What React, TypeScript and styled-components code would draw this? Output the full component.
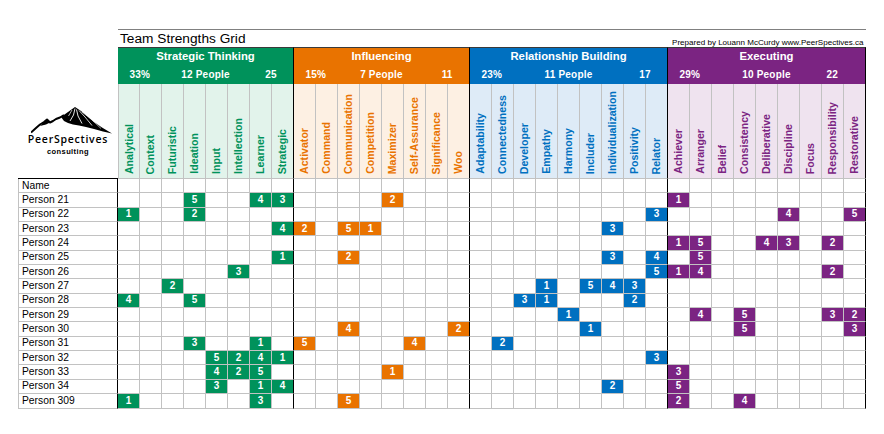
import React from 'react';
import styled, { createGlobalStyle } from 'styled-components';

const GlobalStyle = createGlobalStyle`
  html, body { margin: 0; padding: 0; background: #ffffff; }
  body { font-family: "Liberation Sans", Arial, sans-serif; color: #000; }
  * { box-sizing: border-box; }
`;

type Cat = {
  title: string;
  pct: string;
  people: string;
  count: string;
  color: string;
  tint: string;
  countSpan: number;
  strengths: string[];
};

const CATS: Cat[] = [
  {
    title: 'Strategic Thinking', pct: '33%', people: '12 People', count: '25',
    color: '#00925b', tint: '#e2f3eb', countSpan: 2,
    strengths: ['Analytical', 'Context', 'Futuristic', 'Ideation', 'Input', 'Intellection', 'Learner', 'Strategic'],
  },
  {
    title: 'Influencing', pct: '15%', people: '7 People', count: '11',
    color: '#e97300', tint: '#fdf0e3', countSpan: 2,
    strengths: ['Activator', 'Command', 'Communication', 'Competition', 'Maximizer', 'Self-Assurance', 'Significance', 'Woo'],
  },
  {
    title: 'Relationship Building', pct: '23%', people: '11 People', count: '17',
    color: '#0070c0', tint: '#deebf7', countSpan: 2,
    strengths: ['Adaptability', 'Connectedness', 'Developer', 'Empathy', 'Harmony', 'Includer', 'Individualization', 'Positivity', 'Relator'],
  },
  {
    title: 'Executing', pct: '29%', people: '10 People', count: '22',
    color: '#7b2482', tint: '#efe3ef', countSpan: 3,
    strengths: ['Achiever', 'Arranger', 'Belief', 'Consistency', 'Deliberative', 'Discipline', 'Focus', 'Responsibility', 'Restorative'],
  },
];

const PEOPLE: [string, Record<string, number>][] = [
  ['Name', {}],
  ['Person 21', { Ideation: 5, Learner: 4, Strategic: 3, Maximizer: 2, Achiever: 1 }],
  ['Person 22', { Analytical: 1, Ideation: 2, Relator: 3, Discipline: 4, Restorative: 5 }],
  ['Person 23', { Strategic: 4, Activator: 2, Communication: 5, Competition: 1, Individualization: 3 }],
  ['Person 24', { Achiever: 1, Arranger: 5, Deliberative: 4, Discipline: 3, Responsibility: 2 }],
  ['Person 25', { Strategic: 1, Communication: 2, Individualization: 3, Relator: 4, Arranger: 5 }],
  ['Person 26', { Intellection: 3, Relator: 5, Achiever: 1, Arranger: 4, Responsibility: 2 }],
  ['Person 27', { Futuristic: 2, Empathy: 1, Includer: 5, Individualization: 4, Positivity: 3 }],
  ['Person 28', { Analytical: 4, Ideation: 5, Developer: 3, Empathy: 1, Positivity: 2 }],
  ['Person 29', { Harmony: 1, Arranger: 4, Consistency: 5, Responsibility: 3, Restorative: 2 }],
  ['Person 30', { Communication: 4, Woo: 2, Includer: 1, Consistency: 5, Restorative: 3 }],
  ['Person 31', { Ideation: 3, Learner: 1, Activator: 5, 'Self-Assurance': 4, Connectedness: 2 }],
  ['Person 32', { Input: 5, Intellection: 2, Learner: 4, Strategic: 1, Relator: 3 }],
  ['Person 33', { Input: 4, Intellection: 2, Learner: 5, Maximizer: 1, Achiever: 3 }],
  ['Person 34', { Input: 3, Learner: 1, Strategic: 4, Individualization: 2, Achiever: 5 }],
  ['Person 309', { Analytical: 1, Learner: 3, Communication: 5, Achiever: 2, Consistency: 4 }],
];

const GRID_LINE = '#c2c2c2';
const COL_W = 22;
const NAME_W = 100;

const Sheet = styled.div`
  display: flex;
  flex-direction: column;
  width: ${NAME_W + 34 * COL_W}px;
  margin: 29px 0 0 18px;
`;

const TitleRow = styled.div`
  display: flex;
  height: 18px;
`;

const TitleSpacer = styled.div`
  width: ${NAME_W}px;
  flex: none;
`;

const TitleBar = styled.div`
  flex: 1;
  border-top: 1px solid #808080;
  display: flex;
  justify-content: space-between;
  align-items: flex-end;
`;

const Title = styled.div`
  font-size: 13.7px;
  line-height: 1;
  padding: 0 0 1px 2px;
  white-space: nowrap;
`;

const Credit = styled.div`
  font-size: 8.05px;
  line-height: 1;
  padding: 0 2.5px 0 0;
  white-space: nowrap;
`;

const HeaderRow = styled.div`
  display: flex;
  height: 132px;
`;

const LogoCell = styled.div`
  width: ${NAME_W}px;
  flex: none;
  border-bottom: 1px solid #000;
  display: flex;
  flex-direction: column;
  align-items: center;
  padding-top: 59px;
`;

const LogoMark = styled.svg`
  display: block;
  width: 82px;
  height: 28px;
  margin-left: 8px;
`;

const LogoName = styled.div`
  font-family: "Open Sans", "DejaVu Sans", sans-serif;
  font-weight: 600;
  font-size: 10.5px;
  letter-spacing: 0.75px;
  line-height: 11px;
  white-space: nowrap;
`;

const LogoSub = styled.div`
  font-family: "Liberation Sans", Arial, sans-serif;
  font-weight: 700;
  font-size: 7.5px;
  letter-spacing: 0.4px;
  line-height: 9px;
  margin-top: 1.6px;
  white-space: nowrap;
`;

const CategoryBlock = styled.div<{ $n: number }>`
  width: ${(p) => p.$n * COL_W}px;
  flex: none;
  display: flex;
  flex-direction: column;
`;

const Band = styled.div<{ $color: string }>`
  height: 37px;
  background: ${(p) => p.$color};
  border-top: 1px solid #3a3a3a;
  border-right: 1px solid #000;
  color: #fff;
  font-weight: 700;
  display: flex;
  flex-direction: column;
`;

const BandTitle = styled.div`
  height: 18px;
  display: flex;
  align-items: center;
  justify-content: center;
  font-size: 11.3px;
  line-height: 1;
  white-space: nowrap;
`;

const BandStats = styled.div<{ $n: number }>`
  height: 18px;
  display: grid;
  grid-template-columns: repeat(${(p) => p.$n}, 1fr);
  align-items: center;
  font-size: 10px;
  letter-spacing: 0.2px;
  line-height: 1;
`;

const Stat = styled.span<{ $start: number; $span: number }>`
  grid-row: 1;
  grid-column: ${(p) => p.$start} / span ${(p) => p.$span};
  text-align: center;
  white-space: nowrap;
`;

const Heads = styled.div<{ $n: number }>`
  height: 95px;
  display: grid;
  grid-template-columns: repeat(${(p) => p.$n}, 1fr);
`;

const Head = styled.div<{ $tint: string; $color: string; $edge: boolean; $first: boolean }>`
  background: ${(p) => p.$tint};
  color: ${(p) => p.$color};
  border-right: 1px solid ${(p) => (p.$edge ? '#000' : GRID_LINE)};
  border-left: ${(p) => (p.$first ? `1px solid ${GRID_LINE}` : 'none')};
  border-bottom: 1px solid ${GRID_LINE};
  display: flex;
  align-items: flex-end;
  justify-content: center;
  padding-bottom: 4px;
  font-weight: 700;
  font-size: 10.6px;
`;

const HeadText = styled.span`
  writing-mode: vertical-rl;
  transform: rotate(180deg);
  white-space: nowrap;
  line-height: 1;
`;

const DataRow = styled.div`
  display: grid;
  grid-template-columns: ${NAME_W}px repeat(34, ${COL_W}px);
  height: 14.35px;
`;

const NameCell = styled.div`
  border-left: 1px solid ${GRID_LINE};
  border-right: 1px solid #000;
  border-bottom: 1px solid ${GRID_LINE};
  display: flex;
  align-items: center;
  padding-left: 3px;
  font-size: 10.3px;
  line-height: 1;
  white-space: nowrap;
`;

const Cell = styled.div<{ $fill?: string; $edge: boolean }>`
  background: ${(p) => p.$fill ?? '#fff'};
  border-right: 1px solid ${(p) => (p.$edge ? '#000' : GRID_LINE)};
  border-bottom: 1px solid ${GRID_LINE};
  display: flex;
  align-items: center;
  justify-content: center;
  color: #fff;
  font-weight: 700;
  font-size: 10px;
  line-height: 1;
`;

const Mountain = () => (
  <LogoMark viewBox="0 0 82 28">
    <polyline
      points="0,26.5 5,22 9,18.5 13,16 16,13.5 19,16.5 22,15 25,13 29,11.5 33,9"
      fill="none"
      stroke="#000"
      strokeWidth="2"
      strokeLinejoin="round"
    />
    <polygon points="9,20 14,15 16,13.5 19,16.5 15,18.5" fill="#000" />
    <polygon
      points="30,11 37,6 44,1 50,5 56,10 63,16 71,21.5 81,27.5 72,25.5 63,23 55,21 48,19.5 42,18.5 37,17 33,15"
      fill="#000"
    />
    <polyline points="44,2.5 42.5,9 39,15" fill="none" stroke="#fff" strokeWidth="0.9" />
    <polyline points="45.5,3.5 47,10 51,17.5" fill="none" stroke="#fff" strokeWidth="0.9" />
    <polyline points="48,4.5 54,11 61,19.5" fill="none" stroke="#fff" strokeWidth="0.8" />
    <polyline points="41,4 37.5,10" fill="none" stroke="#fff" strokeWidth="0.7" />
    <polyline points="51,6 60,13 70,22.5" fill="none" stroke="#fff" strokeWidth="0.6" />
  </LogoMark>
);

const catOf = (name: string) => CATS.find((c) => c.strengths.includes(name))!;

const ALL = CATS.flatMap((c) =>
  c.strengths.map((s, i) => ({ name: s, edge: i === c.strengths.length - 1 })),
);

export default function App() {
  return (
    <>
      <GlobalStyle />
      <Sheet>
        <TitleRow>
          <TitleSpacer />
          <TitleBar>
            <Title>Team Strengths Grid</Title>
            <Credit>Prepared by Louann McCurdy www.PeerSpectives.ca</Credit>
          </TitleBar>
        </TitleRow>

        <HeaderRow>
          <LogoCell>
            <Mountain />
            <LogoName>PeerSpectives</LogoName>
            <LogoSub>consulting</LogoSub>
          </LogoCell>
          {CATS.map((c, ci) => {
            const n = c.strengths.length;
            return (
              <CategoryBlock key={c.title} $n={n}>
                <Band $color={c.color}>
                  <BandTitle>{c.title}</BandTitle>
                  <BandStats $n={n}>
                    <Stat $start={1} $span={2}>{c.pct}</Stat>
                    <Stat $start={3} $span={n - 4}>{c.people}</Stat>
                    <Stat $start={n - c.countSpan + 1} $span={c.countSpan}>{c.count}</Stat>
                  </BandStats>
                </Band>
                <Heads $n={n}>
                  {c.strengths.map((s, i) => (
                    <Head
                      key={s}
                      $tint={c.tint}
                      $color={c.color}
                      $edge={i === n - 1}
                      $first={ci === 0 && i === 0}
                    >
                      <HeadText>{s}</HeadText>
                    </Head>
                  ))}
                </Heads>
              </CategoryBlock>
            );
          })}
        </HeaderRow>

        {PEOPLE.map(([person, ranks]) => (
          <DataRow key={person}>
            <NameCell>{person}</NameCell>
            {ALL.map((col) => {
              const r = ranks[col.name];
              return (
                <Cell key={col.name} $edge={col.edge} $fill={r ? catOf(col.name).color : undefined}>
                  {r ?? ''}
                </Cell>
              );
            })}
          </DataRow>
        ))}
      </Sheet>
    </>
  );
}
